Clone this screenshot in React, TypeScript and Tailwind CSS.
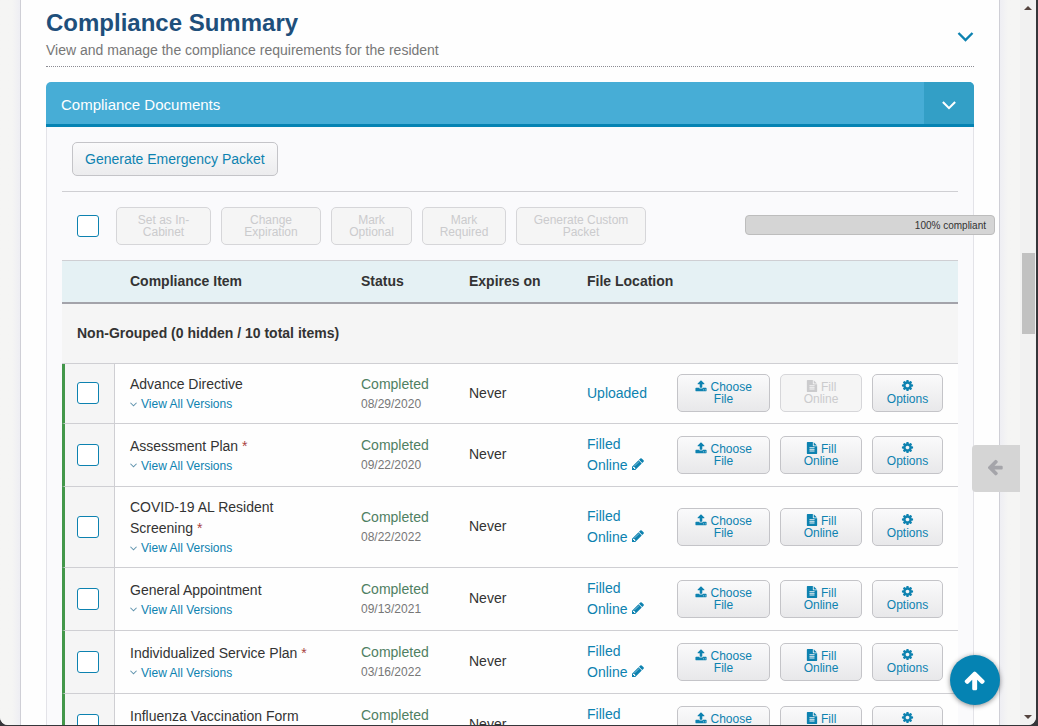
import { ReactNode } from "react";
import clsx from "clsx";

type ComplianceItem = {
  name: string;
  required?: boolean;
  date: string;
  uploaded?: boolean;
};

const items: ComplianceItem[] = [
  { name: "Advance Directive", date: "08/29/2020", uploaded: true },
  { name: "Assessment Plan", required: true, date: "09/22/2020" },
  { name: "COVID-19 AL Resident Screening", required: true, date: "08/22/2022" },
  { name: "General Appointment", date: "09/13/2021" },
  { name: "Individualized Service Plan", required: true, date: "03/16/2022" },
  { name: "Influenza Vaccination Form", date: "10/04/2021" },
];

const bulkActions = [
  { label: "Set as In-Cabinet", width: "w-[95px]" },
  { label: "Change Expiration", width: "w-[100px]" },
  { label: "Mark Optional", width: "w-[81px]" },
  { label: "Mark Required", width: "w-[84px]" },
  { label: "Generate Custom Packet", width: "w-[130px]" },
];

const icons = {
  arrowUp:
    "M1611 971q0 51-37 90l-75 75q-38 38-91 38-54 0-90-38l-294-293v704q0 52-37.5 84.5t-90.5 32.5h-128q-53 0-90.5-32.5t-37.5-84.5v-704l-294 293q-36 38-90 38t-90-38l-75-75q-38-38-38-90 0-53 38-91l651-651q35-37 90-37 54 0 91 37l651 651q37 39 37 91z",
  upload:
    "M1344 1472q0-26-19-45t-45-19-45 19-19 45 19 45 45 19 45-19 19-45zm256 0q0-26-19-45t-45-19-45 19-19 45 19 45 45 19 45-19 19-45zm128-224v320q0 40-28 68t-68 28h-1472q-40 0-68-28t-28-68v-320q0-40 28-68t68-28h427q21 56 70.5 92t110.5 36h256q61 0 110.5-36t70.5-92h427q40 0 68 28t28 68zm-325-648q-17 40-59 40h-256v448q0 26-19 45t-45 19h-256q-26 0-45-19t-19-45v-448h-256q-42 0-59-40-17-39 14-69l448-448q18-19 45-19t45 19l448 448q31 30 14 69z",
  file: "M1596 476q14 14 28 36h-472v-472q22 14 36 28zm-476 164h544v1056q0 40-28 68t-68 28h-1344q-40 0-68-28t-28-68v-1600q0-40 28-68t68-28h800v544q0 40 28 68t68 28zm160 736v-64q0-14-9-23t-23-9h-704q-14 0-23 9t-9 23v64q0 14 9 23t23 9h704q14 0 23-9t9-23zm0-256v-64q0-14-9-23t-23-9h-704q-14 0-23 9t-9 23v64q0 14 9 23t23 9h704q14 0 23-9t9-23zm0-256v-64q0-14-9-23t-23-9h-704q-14 0-23 9t-9 23v64q0 14 9 23t23 9h704q14 0 23-9t9-23z",
  cog: "M1152 896q0-106-75-181t-181-75-181 75-75 181 75 181 181 75 181-75 75-181zm512-109v222q0 12-8 23t-20 13l-185 28q-19 54-39 91 35 50 107 138 10 12 10 25t-9 23q-27 37-99 108t-94 71q-12 0-26-9l-138-108q-44 23-91 38-16 136-29 186-7 28-36 28h-222q-14 0-24.5-8.5t-11.5-21.5l-28-184q-49-16-90-37l-141 107q-10 9-25 9-14 0-25-11-126-114-165-168-7-10-7-23 0-12 8-23 15-21 51-66.5t54-70.5q-27-50-41-99l-183-27q-13-2-21-12.5t-8-23.5v-222q0-12 8-23t19-13l186-28q14-46 39-92-40-57-107-138-10-12-10-24 0-10 9-23 26-36 98.5-107.5t94.5-71.5q13 0 26 10l138 107q44-23 91-38 16-136 29-186 7-28 36-28h222q14 0 24.5 8.5t11.5 21.5l28 184q49 16 90 37l142-107q9-9 24-9 13 0 25 10 129 119 165 170 7 8 7 22 0 12-8 23-15 21-51 66.5t-54 70.5q26 50 41 98l183 28q13 2 21 12.5t8 23.5z",
  pencil:
    "M491 1536l91-91-235-235-91 91v107h128v128h107zm523-928q0-22-22-22-10 0-17 7l-542 542q-7 7-7 17 0 22 22 22 10 0 17-7l542-542q7-7 7-17zm-54-192l416 416-832 832h-416v-416zm683 96q0 53-37 90l-166 166-416-416 166-165q36-38 90-38 53 0 91 38l235 234q37 39 37 91z",
};

function Icon({
  name,
  className,
}: {
  name: keyof typeof icons;
  className?: string;
}) {
  return (
    <svg viewBox="0 0 1792 1792" fill="currentColor" className={className}>
      <path d={icons[name]} />
    </svg>
  );
}

function Chevron({ className }: { className?: string }) {
  return (
    <svg
      viewBox="0 0 16 10"
      className={className}
      fill="none"
      stroke="currentColor"
      strokeWidth="2.4"
    >
      <path d="M1 1l7 7 7-7" />
    </svg>
  );
}

function SmallButton({
  className,
  disabled,
  children,
}: {
  className?: string;
  disabled?: boolean;
  children: ReactNode;
}) {
  return (
    <button
      type="button"
      disabled={disabled}
      className={clsx(
        "h-[38px] shrink-0 rounded-[5px] border px-3 text-center text-xs leading-3",
        disabled
          ? "border-[#d6d6d9] bg-[#f5f5f5] text-[#cbcbcd]"
          : "border-[#c4c4c8] bg-linear-to-b from-[#fafafb] to-[#e8e8ea] text-[#0d82b0]",
        className
      )}
    >
      {children}
    </button>
  );
}

function Checkbox({ label }: { label: string }) {
  return (
    <input
      type="checkbox"
      aria-label={label}
      className="block size-[22px] shrink-0 appearance-none rounded-[3px] border border-[#0d82b0] bg-white checked:bg-[#0d82b0]"
    />
  );
}

function ItemRow({ item }: { item: ComplianceItem }) {
  return (
    <tr className="bg-[#fefefe] [&>td]:border-b [&>td]:border-[#cfcfd3]">
      <td className="border-r border-l-[3px] border-l-[#43974a]! bg-[#f5f5f5] pb-px pl-3">
        <Checkbox label={item.name} />
      </td>
      <td className="px-[15px] py-2.5">
        <div className="leading-[21px] text-[#333]">
          {item.name}
          {item.required && <span className="text-[#a94442]"> *</span>}
        </div>
        <a
          href="#"
          className="flex items-center text-xs leading-[18px] text-[#0d82b0]"
        >
          <Chevron className="mr-1 h-[5px] w-[7px] text-[#5f93ad]" />
          View All Versions
        </a>
      </td>
      <td className="px-[15px] pt-[9px] pb-2.5">
        <div className="leading-[21px] text-[#4f8062]">Completed</div>
        <div className="text-xs leading-[18px] text-[#777]">{item.date}</div>
      </td>
      <td className="px-[15px] pt-[9px] pb-2.5 leading-[21px] text-[#333]">
        Never
      </td>
      <td className="py-2.5 pl-[15px] leading-[21px]">
        <a href="#" className="text-[#0d82b0]">
          {item.uploaded ? (
            "Uploaded"
          ) : (
            <>
              Filled Online{" "}
              <Icon name="pencil" className="-mt-1 inline size-3.5 align-[-1px]" />
            </>
          )}
        </a>
      </td>
      <td className="pt-[9px] pb-2.5 pl-[15px]">
        <div className="flex gap-2.5">
          <SmallButton className="w-[93px]">
            <Icon name="upload" className="-mt-1 inline size-3 align-[-1px]" />{" "}
            Choose File
          </SmallButton>
          <SmallButton className="w-[82px]" disabled={item.uploaded}>
            <Icon name="file" className="-mt-1 inline size-3 align-[-1px]" />{" "}
            Fill Online
          </SmallButton>
          <SmallButton className="w-[71px]">
            <Icon name="cog" className="-mt-1 inline size-[13px] align-[-1px]" />{" "}
            Options
          </SmallButton>
        </div>
      </td>
    </tr>
  );
}

function ComplianceTable() {
  return (
    <table className="w-full table-fixed border-separate border-spacing-0 text-left">
      <colgroup>
        <col className="w-[53px]" />
        <col />
        <col className="w-[108px]" />
        <col className="w-[118px]" />
        <col className="w-[90px]" />
        <col className="w-[296px]" />
      </colgroup>
      <thead>
        <tr className="h-11 bg-[#e5f1f4] text-[#333] [&>*]:border-t [&>*]:border-b-2 [&>*]:border-t-[#cfcfd3] [&>*]:border-b-[#a3a3aa] [&>*]:pb-0.5">
          <td />
          <th className="px-[15px]">Compliance Item</th>
          <th className="px-[15px]">Status</th>
          <th className="px-[15px]">Expires on</th>
          <th className="px-[15px]" colSpan={2}>
            File Location
          </th>
        </tr>
      </thead>
      <tbody>
        <tr className="h-15 bg-[#f5f5f5]">
          <th
            colSpan={6}
            className="border-b border-[#cfcfd3] px-[15px] pb-0.5 text-[#333]"
          >
            Non-Grouped (0 hidden / 10 total items)
          </th>
        </tr>
        {items.map((item) => (
          <ItemRow key={item.name} item={item} />
        ))}
      </tbody>
    </table>
  );
}

function ScrollTrack() {
  return (
    <div className="flex w-4 flex-col items-center justify-between bg-[#f1f1f1] py-1.5">
      <svg viewBox="0 0 8 4" className="h-1 w-2" fill="#54443f">
        <path d="M0 4l4-4 4 4z" />
      </svg>
      <div className="mt-[243px] mb-auto h-[81px] w-[13px] bg-[#c1c1c1]" />
      <svg viewBox="0 0 8 4" className="h-1 w-2" fill="#54443f">
        <path d="M0 0l4 4 4-4z" />
      </svg>
    </div>
  );
}

export default function App() {
  return (
    <div className="h-screen overflow-hidden bg-[#36363a] pr-0.5 pb-px font-['Liberation_Sans',Arial,sans-serif] text-sm">
      <div className="flex h-full overflow-hidden rounded-b-lg bg-[#f5f5f5]">
        <div className="w-5 shrink-0 bg-linear-to-r from-[#f5f5f4] from-60% to-[#eeeef3]" />
        <main className="min-w-0 flex-1 border-x border-[#cfcfd6] bg-[#fefefe] px-[25px]">
          <header className="flex items-center justify-between border-b border-dotted border-[#8b8b93] pt-2 pb-1">
            <div>
              <h1 className="text-2xl leading-[30px] font-bold text-[#1e4f7b]">
                Compliance Summary
              </h1>
              <p className="leading-6 text-[#777]">
                View and manage the compliance requirements for the resident
              </p>
            </div>
            <button type="button" aria-label="Toggle summary" className="pt-1">
              <Chevron className="h-2.5 w-[17px] text-[#0d82b0]" />
            </button>
          </header>

          <section className="mt-[15px]">
            <div className="flex h-[45px] overflow-hidden rounded-t-[5px] border-b-3 border-[#0583b3] bg-[#47add6] text-white">
              <h2 className="flex-1 px-[15px] text-[15px] leading-[45px]">
                Compliance Documents
              </h2>
              <button
                type="button"
                aria-label="Toggle documents"
                className="flex w-[50px] items-center justify-center bg-[#339fc6] pt-1"
              >
                <Chevron className="h-[9px] w-[14px]" />
              </button>
            </div>
            <div className="border-x border-[#e3e3e8] bg-[#fafafc] px-[15px] pt-[15px]">
              <div className="border-b border-[#cfcfd3] px-2.5 pb-[15px]">
                <button
                  type="button"
                  className="block h-[34px] rounded-[5px] border border-[#c4c4c8] bg-linear-to-b from-[#fafafb] to-[#ececee] px-3 text-[#0d82b0]"
                >
                  Generate Emergency Packet
                </button>
              </div>
              <div className="flex items-center py-[15px] pl-[15px]">
                <Checkbox label="Select all" />
                <div className="ml-[17px] flex gap-2.5">
                  {bulkActions.map(({ label, width }) => (
                    <SmallButton key={label} disabled className={width}>
                      {label}
                    </SmallButton>
                  ))}
                </div>
                <div className="relative -mr-[37px] mb-0.5 ml-auto h-5 w-[250px] rounded-[4px] border border-[#bdbdbd] bg-[#d5d5d5] pr-2 text-right text-[10px] leading-5 text-[#333]">
                  100% compliant
                </div>
              </div>
              <ComplianceTable />
            </div>
          </section>
        </main>
        <div className="w-5 shrink-0 bg-linear-to-l from-[#f5f5f4] from-60% to-[#eeeef3]" />
        <ScrollTrack />
      </div>

      <button
        type="button"
        aria-label="Open side panel"
        className="fixed top-[445px] right-[18px] flex h-[47px] w-12 items-center justify-center rounded-l-[4px] bg-[#d5d5d5] pr-0.5 pb-1 text-[#a5a5aa]"
      >
        <Icon name="arrowUp" className="size-[18px] -rotate-90" />
      </button>
      <button
        type="button"
        aria-label="Back to top"
        className="fixed right-[38px] bottom-[21px] flex size-[50px] items-center justify-center rounded-full bg-[#0583b3] text-white shadow-[0_1px_5px_rgba(0,0,0,0.45)]"
      >
        <Icon name="arrowUp" className="size-[23px]" />
      </button>
    </div>
  );
}
